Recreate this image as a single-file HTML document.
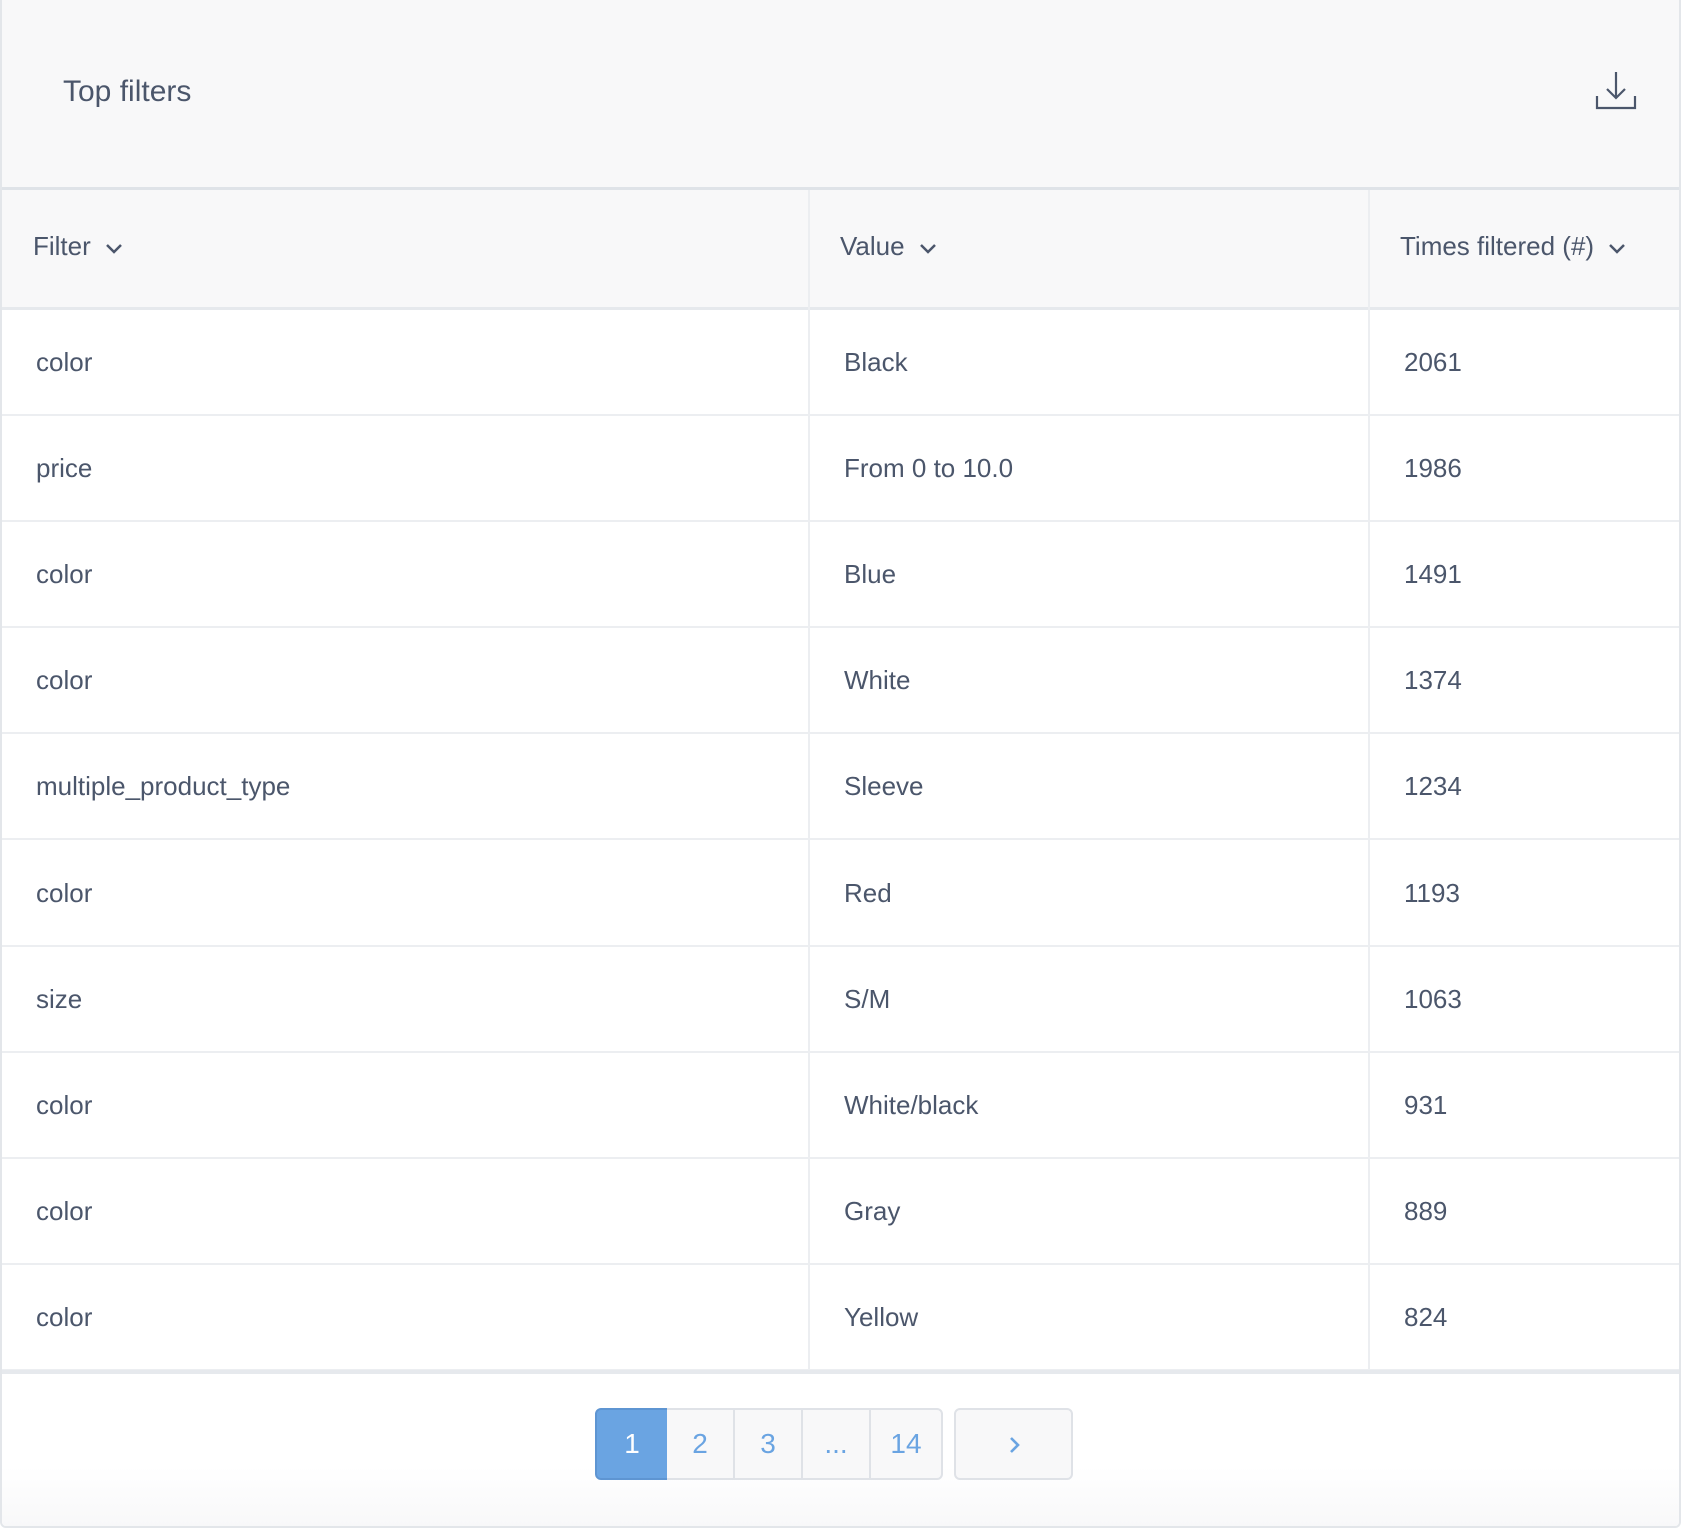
<!DOCTYPE html>
<html><head><meta charset="utf-8"><style>
*{box-sizing:border-box;margin:0;padding:0}
body{width:1682px;height:1530px;background:#fff;font-family:"Liberation Sans",sans-serif;color:#4b566b;overflow:hidden;position:relative}
.card{position:absolute;left:0;top:0;width:1681px;height:1528px;border:2px solid #e3e6ea;border-top:none;border-radius:0 0 6px 6px;overflow:hidden}
.head{position:absolute;left:0;top:0;width:100%;height:190px;background:#f8f8f9;border-bottom:3px solid #dfe3e8}
.title{position:absolute;left:61px;top:75px;font-size:30px}
.ic{position:absolute;left:1592px;top:70px}
.th{position:absolute;top:190px;height:120px;width:100%;background:#f8f8f9;border-bottom:3px solid #e6e9ed}
.cell{position:absolute;font-size:26px}
.vl{position:absolute;top:190px;height:1180px;width:2px;background:#eceef1}
.row{position:absolute;left:0;width:100%;height:106px;border-bottom:2px solid #eceef1}
.foot{position:absolute;left:0;top:1370px;width:100%;height:158px;border-top:4px solid #e6e9ed;background:linear-gradient(#fff 60%,#f8f8f9)}
.pg{position:absolute;top:1408px;height:72px;border:2px solid #dfe2e7;background:#f8f8f9;color:#6aa4e2;font-size:28px;text-align:center;line-height:68px}
</style></head><body>
<div class="card">
<div class="head"><div class="title">Top filters</div>
<svg class="ic" width="44" height="42" viewBox="0 0 44 42" fill="none" stroke="#4b566b" stroke-width="2.2"><path d="M22 2v26M13 19l9 9 9-9M3 26v12h38V26"/></svg></div>
<div class="th">
<div class="cell" style="left:31px;top:41px">Filter <svg width="20" height="14" style="margin-left:6px" viewBox="0 0 20 14" fill="none" stroke="#4b566b" stroke-width="2.5"><path d="M3 4l7 7 7-7"/></svg></div>
<div class="cell" style="left:838px;top:41px">Value <svg width="20" height="14" style="margin-left:6px" viewBox="0 0 20 14" fill="none" stroke="#4b566b" stroke-width="2.5"><path d="M3 4l7 7 7-7"/></svg></div>
<div class="cell" style="left:1398px;top:41px">Times filtered (#) <svg width="20" height="14" style="margin-left:6px" viewBox="0 0 20 14" fill="none" stroke="#4b566b" stroke-width="2.5"><path d="M3 4l7 7 7-7"/></svg></div>
</div>
<div id="rows"></div>
<div class="vl" style="left:806px"></div><div class="vl" style="left:1366px"></div>
<div class="foot"></div>
<div class="pg" style="left:593px;width:74px;background:#6aa4e2;border-color:#5e95d2;color:#fff;border-radius:6px 0 0 6px">1</div>
<div class="pg" style="left:665px;width:68px;border-left:none">2</div>
<div class="pg" style="left:731px;width:70px;border-left:2px solid #dfe2e7">3</div>
<div class="pg" style="left:799px;width:70px">...</div>
<div class="pg" style="left:867px;width:74px;border-radius:0 6px 6px 0">14</div>
<div class="pg" style="left:952px;width:119px;border-radius:6px"><svg width="14" height="20" viewBox="0 0 14 20" fill="none" stroke="#6aa4e2" stroke-width="2.6" style="vertical-align:-2px"><path d="M4 3l7 7-7 7"/></svg></div>
</div>
<script>
var d=[["color","Black","2061"],["price","From 0 to 10.0","1986"],["color","Blue","1491"],["color","White","1374"],["multiple_product_type","Sleeve","1234"],["color","Red","1193"],["size","S/M","1063"],["color","White/black","931"],["color","Gray","889"],["color","Yellow","824"]];
var h="";d.forEach(function(r,i){var t=310+i*106.1;h+='<div class="row" style="top:'+t+'px"><div class="cell" style="left:34px;top:37px">'+r[0]+'</div><div class="cell" style="left:842px;top:37px">'+r[1]+'</div><div class="cell" style="left:1402px;top:37px">'+r[2]+'</div></div>';});
document.getElementById("rows").innerHTML=h;
</script>
</body></html>
